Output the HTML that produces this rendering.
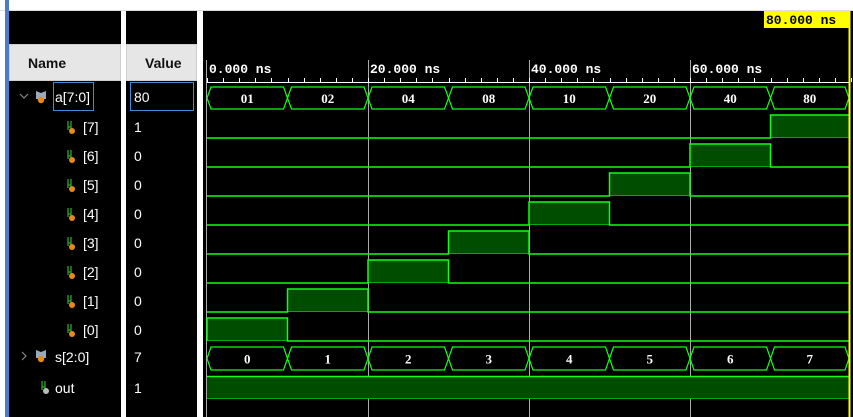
<!DOCTYPE html>
<html><head><meta charset="utf-8"><style>
*{margin:0;padding:0;box-sizing:border-box}
body{width:853px;height:417px;overflow:hidden;background:#fff;position:relative;font-family:"Liberation Sans",sans-serif}
.a{position:absolute}
.t{position:absolute;color:#fff;font-size:14px;line-height:16px}
</style></head><body>
<div class="a" style="left:0;top:0;width:853px;height:11px;background:#fff;border-bottom:1px solid #ddd"></div>
<div class="a" style="left:5px;top:0;width:4px;height:417px;background:#4a7cc9"></div>
<div class="a" style="left:9px;top:11px;width:112px;height:406px;background:#000"></div>
<div class="a" style="left:126px;top:11px;width:71px;height:406px;background:#000"></div>
<div class="a" style="left:203px;top:11px;width:650px;height:406px;background:#000"></div>
<div class="a" style="left:9px;top:44px;width:112px;height:37px;background:#e6e6e6;border:1px solid #cfcfcf"></div>
<div class="a" style="left:126px;top:44px;width:71px;height:37px;background:#e6e6e6;border:1px solid #cfcfcf"></div>
<div class="t" style="left:28px;top:55px;color:#111;font-weight:bold">Name</div>
<div class="t" style="left:145px;top:55px;color:#111;font-weight:bold">Value</div>
<div class="a" style="left:53px;top:82px;width:41px;height:29px;border:1px solid #3d8ed8"></div>
<div class="a" style="left:130px;top:82px;width:64px;height:29px;border:1px solid #3d8ed8"></div>
<div class="t" style="left:55px;top:89px">a[7:0]</div>
<div class="t" style="left:134px;top:89px">80</div>
<div class="t" style="left:55px;top:349px">s[2:0]</div>
<div class="t" style="left:134px;top:349px">7</div>
<div class="t" style="left:55px;top:380px">out</div>
<div class="t" style="left:134px;top:380px">1</div>

<svg class="a" style="left:0;top:0" width="853" height="417" font-family="Liberation Mono,monospace" font-weight="bold">
<g fill="none" stroke="#888" stroke-width="1.2">
<polyline points="20,94 24,98 28,94"/><polyline points="22,352 26,356 22,360"/>
</g>
<g>
<path d="M36,91 l5,2 l5,-2 v8 h-10z" fill="#9ab"/><circle cx="41" cy="100" r="3.2" fill="#e88a1a"/>
<path d="M36,350 l5,2 l5,-2 v8 h-10z" fill="#9ab"/><circle cx="41" cy="359" r="3.2" fill="#e88a1a"/>
</g>
<g fill="none" stroke="#2a9a2a" stroke-width="1.4">
<path d="M68,121v9M71,121v9M68,127h3 M68,150v9M71,150v9M68,156h3 M68,179v9M71,179v9M68,185h3 M68,208v9M71,208v9M68,214h3 M68,237v9M71,237v9M68,243h3 M68,266v9M71,266v9M68,272h3 M68,295v9M71,295v9M68,301h3 M68,324v9M71,324v9M68,330h3 M42,381v9M45,381v9M42,387h3"/>
</g>
<g fill="#e88a1a"><circle cx="72" cy="131" r="3"/><circle cx="72" cy="160" r="3"/><circle cx="72" cy="189" r="3"/><circle cx="72" cy="218" r="3"/><circle cx="72" cy="247" r="3"/><circle cx="72" cy="276" r="3"/><circle cx="72" cy="305" r="3"/><circle cx="72" cy="334" r="3"/></g>
<circle cx="46" cy="391" r="3" fill="#bbb"/>
<g fill="#fff" font-family="Liberation Sans,sans-serif" font-weight="normal" font-size="14">
<text x="83" y="132">[7]</text><text x="83" y="161">[6]</text><text x="83" y="190">[5]</text><text x="83" y="219">[4]</text><text x="83" y="248">[3]</text><text x="83" y="277">[2]</text><text x="83" y="306">[1]</text><text x="83" y="335">[0]</text>
<text x="134" y="132">1</text><text x="134" y="161">0</text><text x="134" y="190">0</text><text x="134" y="219">0</text><text x="134" y="248">0</text><text x="134" y="277">0</text><text x="134" y="306">0</text><text x="134" y="335">0</text>
</g>
<g stroke="#aaa" stroke-width="1">
<line x1="206.5" y1="60" x2="206.5" y2="417"/><line x1="368.5" y1="60" x2="368.5" y2="417"/><line x1="529.5" y1="60" x2="529.5" y2="417"/><line x1="690.5" y1="60" x2="690.5" y2="417"/>
<line x1="207" y1="82.5" x2="849" y2="82.5" stroke="#fff"/>
</g>
<g stroke="#fff" id="ticks"></g>
<g fill="#fff" font-size="13">
<text x="209" y="73">0.000 ns</text><text x="370" y="73">20.000 ns</text><text x="531" y="73">40.000 ns</text><text x="692" y="73">60.000 ns</text>
</g>
<g id="w"></g>
<rect x="764" y="11" width="85" height="17" fill="#ff0"/>
<text x="766" y="24" font-size="13" fill="#000">80.000 ns</text>
<line x1="849.5" y1="11" x2="849.5" y2="417" stroke="#ff0" stroke-width="2"/>
</svg>
<script>
var ns="http://www.w3.org/2000/svg";
function el(p,t,a){var e=document.createElementNS(ns,t);for(var k in a)e.setAttribute(k,a[k]);p.appendChild(e);return e}
var tk=document.getElementById('ticks');
for(var i=0;i<=40;i++){var x=Math.round(207+i*16.1)+0.5;el(tk,'line',{x1:x,y1:78,x2:x,y2:82});}
var w=document.getElementById('w');
function X(i){return 207+i*80.5}
for(var k=0;k<8;k++){var ty=115+29*k,lo=ty+23,bit=7-k;var x0=X(bit),x1=Math.min(X(bit+1),849);
 el(w,'rect',{x:x0,y:ty,width:x1-x0,height:23,fill:'#004d00'});
 el(w,'line',{x1:x0,y1:lo-0.5,x2:x1,y2:lo-0.5,stroke:'#0a0'});
 el(w,'path',{d:'M207,'+lo+'H'+x0+'V'+ty+'H'+x1+(x1<849?'V'+lo+'H849':''),stroke:'#1f1',fill:'none','stroke-width':1.5});}
el(w,'rect',{x:207,y:376,width:642,height:23,fill:'#004d00'});
el(w,'line',{x1:207,y1:376.5,x2:849,y2:376.5,stroke:'#1f1','stroke-width':1.5});
el(w,'line',{x1:207,y1:398.5,x2:849,y2:398.5,stroke:'#0a0'});
function bus(y1,y2,labs){var m=(y1+y2)/2;
 for(var i=0;i<8;i++){var a=X(i),b=Math.min(X(i+1),849),d=4;
  el(w,'path',{d:'M'+a+','+m+'L'+(a+d)+','+y1+'H'+(b-d)+'L'+b+','+m+'L'+(b-d)+','+y2+'H'+(a+d)+'Z',fill:'none',stroke:'#1f1','stroke-width':1.2});
  var t=el(w,'text',{x:(a+b)/2,y:m+5,'text-anchor':'middle',fill:'#fff','font-size':13,'font-family':'Liberation Serif,serif'});t.textContent=labs[i];}}
bus(87,109,['01','02','04','08','10','20','40','80']);
bus(347,370,['0','1','2','3','4','5','6','7']);
</script>
</body></html>
